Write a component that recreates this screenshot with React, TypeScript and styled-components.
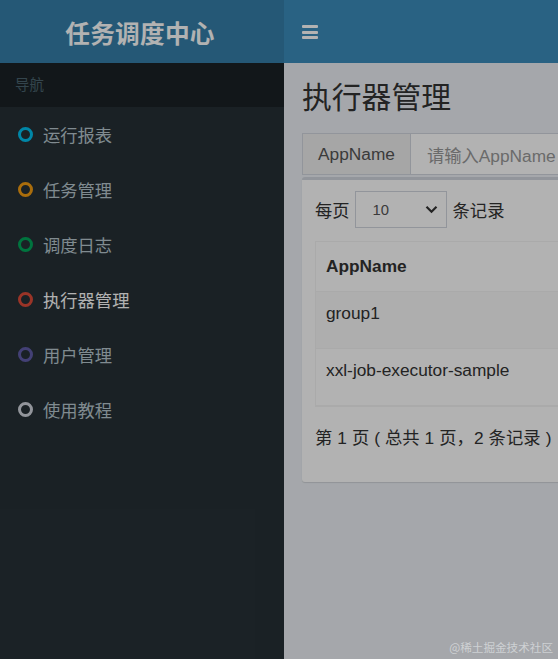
import React from "react";
import styled, { createGlobalStyle } from "styled-components";

const FONT = `"Liberation Sans", "Noto Sans CJK SC", sans-serif`;

const Global = createGlobalStyle`
  html, body { margin: 0; padding: 0; }
  body { font-family: ${FONT}; font-size: 17.3px; color: #333; background: #ecf0f5; }
  * { box-sizing: border-box; }
`;

const Page = styled.div`
  width: 558px;
  height: 659px;
  display: flex;
  flex-direction: column;
  overflow: hidden;
  position: relative;
`;

const Header = styled.header`
  display: flex;
  height: 63px;
  flex-shrink: 0;
`;

const Logo = styled.div`
  width: 284px;
  background: #367fa9;
  color: #fff;
  font-weight: 700;
  font-size: 24.7px;
  display: flex;
  align-items: center;
  justify-content: center;
  padding-right: 4px;
  letter-spacing: 0.2px;
`;

const Navbar = styled.div`
  flex: 1;
  background: #3c8dbc;
  display: flex;
  align-items: center;
  padding-left: 18px;
`;

const Burger = styled.div`
  display: flex;
  flex-direction: column;
  gap: 2.5px;
  margin-top: 1px;
  span {
    display: block;
    width: 16px;
    height: 3px;
    background: #fff;
    border-radius: 1px;
  }
`;

const Body = styled.div`
  flex: 1;
  display: flex;
  min-height: 0;
`;

const Sidebar = styled.aside`
  width: 284px;
  flex-shrink: 0;
  background: #263036;
`;

const NavHeader = styled.div`
  height: 44px;
  line-height: 44px;
  background: #1a2226;
  color: #4b646f;
  font-size: 14.5px;
  padding-left: 15px;
`;

const NavItem = styled.div<{ $active?: boolean }>`
  height: 55px;
  display: flex;
  align-items: center;
  gap: 10px;
  padding-left: 18px;
  color: ${(p) => (p.$active ? "#fff" : "#b8c7ce")};
  font-size: 17.3px;
`;

const Ring = styled.span<{ $color: string }>`
  width: 15px;
  height: 15px;
  border-radius: 50%;
  border: 3.3px solid ${(p) => p.$color};
  flex-shrink: 0;
`;

const Content = styled.main`
  flex: 1;
  min-width: 0;
  background: #ecf0f5;
  padding: 18px 0 0 18px;
  overflow: hidden;
`;

const Title = styled.h1`
  margin: 0;
  font-size: 29.8px;
  font-weight: 400;
  line-height: 34px;
  white-space: nowrap;
  color: #333;
`;

const InputGroup = styled.div`
  margin-top: 18px;
  display: flex;
  height: 42px;
  width: 300px;
`;

const Addon = styled.div`
  width: 109px;
  flex-shrink: 0;
  background: #eee;
  border: 1px solid #d2d6de;
  display: flex;
  align-items: center;
  justify-content: center;
  color: #555;
  font-size: 17.3px;
`;

const SearchInput = styled.div`
  flex: 1;
  background: #fff;
  border: 1px solid #d2d6de;
  border-left: none;
  display: flex;
  align-items: center;
  padding-left: 16px;
  color: #999;
  font-size: 17.3px;
  white-space: nowrap;
  overflow: hidden;
`;

const Box = styled.section`
  margin-top: 2px;
  width: 300px;
  background: #fff;
  border-top: 3px solid #d2d6de;
  border-radius: 3px;
  box-shadow: 0 1px 1px rgba(0, 0, 0, 0.12);
  padding: 11px 0 32px 13px;
`;

const LengthRow = styled.div`
  display: flex;
  align-items: center;
  height: 37px;
  gap: 5px;
  white-space: nowrap;
`;

const Select = styled.div`
  width: 92px;
  height: 37px;
  border: 1px solid #d2d6de;
  display: flex;
  align-items: center;
  justify-content: space-between;
  padding: 0 8px 0 17px;
  font-size: 14.8px;
  color: #555;
  margin-right: 1px;
`;

const Table = styled.div`
  margin-top: 13px;
  border: 1px solid #f4f4f4;
  border-right: none;
`;

const Row = styled.div<{ $head?: boolean; $odd?: boolean }>`
  height: ${(p) => (p.$head ? "50px" : "57px")};
  display: flex;
  align-items: center;
  padding-left: 10px;
  border-bottom: 1px solid #f4f4f4;
  background: ${(p) => (p.$odd ? "#f9f9f9" : "#fff")};
  font-weight: ${(p) => (p.$head ? 700 : 400)};
  color: #333;
  white-space: nowrap;
  padding-bottom: ${(p) => (p.$head ? "0" : "13px")};
`;

const Info = styled.div`
  padding-top: 19px;
  line-height: 24px;
  white-space: nowrap;
  letter-spacing: 0.1px;
`;

const Backdrop = styled.div`
  position: absolute;
  inset: 0;
  background: rgba(0, 0, 0, 0.3);
  pointer-events: none;
`;

const Watermark = styled.div`
  position: absolute;
  right: 5px;
  bottom: 4px;
  font-size: 11.6px;
  color: rgba(225, 228, 230, 0.7);
  font-family: "Noto Sans CJK SC", sans-serif;
`;

const menu = [
  { label: "运行报表", color: "#00c0ef" },
  { label: "任务管理", color: "#f39c12" },
  { label: "调度日志", color: "#00a65a" },
  { label: "执行器管理", color: "#dd4b39", active: true },
  { label: "用户管理", color: "#605ca8" },
  { label: "使用教程", color: "#d2d6de" },
];

export default function App() {
  return (
    <>
      <Global />
      <Page>
        <Header>
          <Logo>任务调度中心</Logo>
          <Navbar>
            <Burger>
              <span />
              <span />
              <span />
            </Burger>
          </Navbar>
        </Header>
        <Body>
          <Sidebar>
            <NavHeader>导航</NavHeader>
            {menu.map((m) => (
              <NavItem key={m.label} $active={m.active}>
                <Ring $color={m.color} />
                {m.label}
              </NavItem>
            ))}
          </Sidebar>
          <Content>
            <Title>执行器管理</Title>
            <InputGroup>
              <Addon>AppName</Addon>
              <SearchInput>请输入AppName</SearchInput>
            </InputGroup>
            <Box>
              <LengthRow>
                每页
                <Select>
                  <span>10</span>
                  <svg width="13" height="9" viewBox="0 0 13 9">
                    <path d="M1.5 1.8 L6.5 6.8 L11.5 1.8" fill="none" stroke="#333" strokeWidth="2.2" />
                  </svg>
                </Select>
                条记录
              </LengthRow>
              <Table>
                <Row $head>AppName</Row>
                <Row $odd>group1</Row>
                <Row>xxl-job-executor-sample</Row>
              </Table>
              <Info>第 1 页 ( 总共 1 页，2 条记录 )</Info>
            </Box>
          </Content>
        </Body>
        <Backdrop />
        <Watermark>@稀土掘金技术社区</Watermark>
      </Page>
    </>
  );
}
